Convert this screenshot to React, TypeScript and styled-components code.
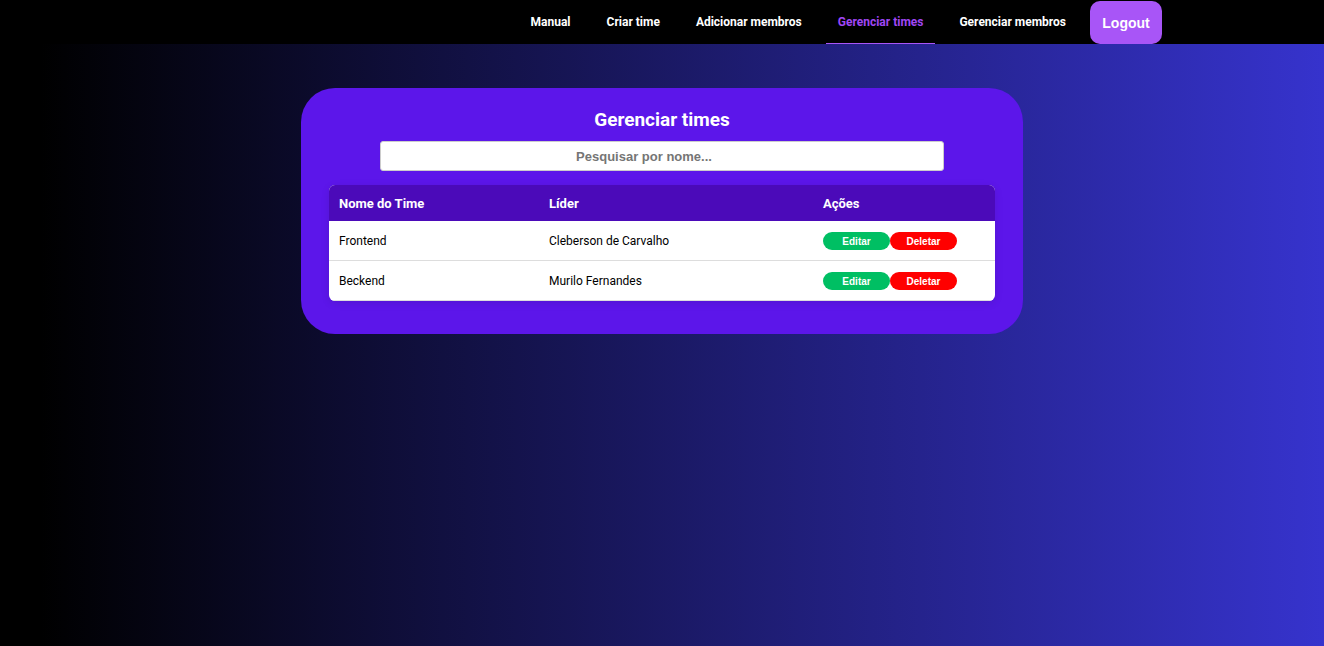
import React, { useState } from "react";
import styled, { createGlobalStyle } from "styled-components";

const GlobalStyle = createGlobalStyle`
  * { box-sizing: border-box; }
  body {
    margin: 0;
    min-height: 100vh;
    background: linear-gradient(90deg, #000 3%, #3633cd 100%) no-repeat;
    font-family: Roboto, "Liberation Sans", sans-serif;
    font-size: 12px;
    color: #000;
  }
`;

const Header = styled.header`
  background: #000;
`;

const Nav = styled.nav`
  display: flex;
  justify-content: flex-end;
  gap: 12px;
  max-width: 1000px;
  height: 44px;
  margin: 0 auto;
`;

const NavLink = styled.a<{ $active?: boolean }>`
  display: flex;
  align-items: center;
  padding: 0 12px;
  border-bottom: 1px solid ${(p) => (p.$active ? "#a855f7" : "transparent")};
  color: ${(p) => (p.$active ? "#a046f5" : "#fff")};
  font-weight: 700;
  line-height: 16px;
  text-decoration: none;
  white-space: nowrap;
`;

const LogoutButton = styled.button`
  width: 72px;
  margin-top: 1px;
  padding: 0;
  border: 0;
  border-radius: 10px;
  background: #a855f7;
  color: #fff;
  font: 700 14px "Liberation Sans", sans-serif;
  cursor: pointer;
`;

const Card = styled.main`
  display: flex;
  flex-direction: column;
  align-items: center;
  max-width: 722px;
  margin: 44px auto 0;
  padding: 20px 28px 33px;
  border-radius: 34px;
  background: #5c16ea;
`;

const Title = styled.h1`
  margin: 0 0 10px;
  color: #fff;
  font-size: 19px;
  line-height: 23px;
`;

const Search = styled.input`
  width: 100%;
  max-width: 564px;
  height: 30px;
  margin-bottom: 14px;
  padding: 0 40px 0 4px;
  border: 1px solid #ccc;
  border-radius: 3px;
  background: #fff;
  font: 700 13px "Liberation Sans", sans-serif;
  text-align: center;

  &::placeholder { color: #757575; }
`;

const Table = styled.table`
  width: 100%;
  border-spacing: 0;
  table-layout: fixed;
  overflow: hidden;
  border-radius: 6px;
  background: #fff;
  box-shadow: 0 2px 8px rgba(0, 0, 0, 0.1);
  text-align: left;
`;

const HeadCell = styled.th<{ $width: string }>`
  width: ${(p) => p.$width};
  height: 36px;
  padding: 0 10px;
  background: #4b0ab9;
  color: #fff;
  font-size: 13px;
`;

const Cell = styled.td`
  height: 40px;
  padding: 0 10px;
  border-bottom: 1px solid #ddd;
`;

const Actions = styled.div`
  display: flex;
  padding-top: 1px;
`;

const ActionButton = styled.button<{ $color: string }>`
  width: 67px;
  height: 18px;
  padding: 0;
  border: 0;
  border-radius: 9px;
  background: ${(p) => p.$color};
  color: #fff;
  font: 700 10px "Liberation Sans", sans-serif;
  cursor: pointer;
`;

const links = ["Manual", "Criar time", "Adicionar membros", "Gerenciar times", "Gerenciar membros"];

const teams = [
  { name: "Frontend", leader: "Cleberson de Carvalho" },
  { name: "Beckend", leader: "Murilo Fernandes" },
];

export default function App() {
  const [query, setQuery] = useState("");
  const visible = teams.filter((t) => t.name.toLowerCase().includes(query.toLowerCase()));

  return (
    <>
      <GlobalStyle />
      <Header>
        <Nav>
          {links.map((label) => (
            <NavLink key={label} href="#" $active={label === "Gerenciar times"}>
              {label}
            </NavLink>
          ))}
          <LogoutButton type="button">Logout</LogoutButton>
        </Nav>
      </Header>
      <Card>
        <Title>Gerenciar times</Title>
        <Search
          type="text"
          aria-label="Pesquisar por nome"
          placeholder="Pesquisar por nome..."
          value={query}
          onChange={(e) => setQuery(e.target.value)}
        />
        <Table>
          <thead>
            <tr>
              <HeadCell scope="col" $width="210px">Nome do Time</HeadCell>
              <HeadCell scope="col" $width="274px">Líder</HeadCell>
              <HeadCell scope="col" $width="auto">Ações</HeadCell>
            </tr>
          </thead>
          <tbody>
            {visible.map((team) => (
              <tr key={team.name}>
                <Cell>{team.name}</Cell>
                <Cell>{team.leader}</Cell>
                <Cell>
                  <Actions>
                    <ActionButton type="button" $color="#00bf63">Editar</ActionButton>
                    <ActionButton type="button" $color="#ff0000">Deletar</ActionButton>
                  </Actions>
                </Cell>
              </tr>
            ))}
          </tbody>
        </Table>
      </Card>
    </>
  );
}
